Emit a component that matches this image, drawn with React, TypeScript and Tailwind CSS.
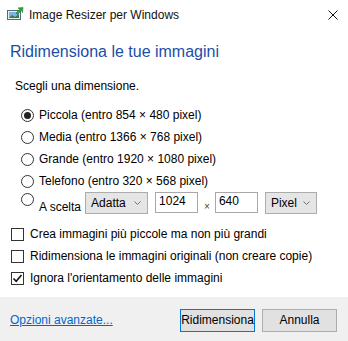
import React from "react";

function AppIcon() {
  return (
    <svg width="17" height="14" viewBox="0 0 17 14" aria-hidden>
      <rect x="0.5" y="3.5" width="13" height="9" fill="#e8eef5" stroke="#4a6a8a" />
      <rect x="2" y="5" width="10" height="6" fill="#7fb2dc" />
      <path d="M2 11 L5 8 L8 10 L12 7 L12 11 Z" fill="#3f7a3a" />
      <path d="M9 6 L13 2 L11 1 L16 0.5 L15.5 5.5 L14.5 3.5 L10.5 7.5 Z" fill="#2fa53a" stroke="#1c7a25" strokeWidth="0.6" />
    </svg>
  );
}

function Radio({ checked, label }: { checked?: boolean; label?: string }) {
  return (
    <div className="flex items-center h-[22px]">
      <span className="ml-[21px] w-[13px] h-[13px] rounded-full border border-[#333] bg-white flex items-center justify-center shrink-0">
        {checked && <span className="w-[7px] h-[7px] rounded-full bg-[#222]" />}
      </span>
      {label && <span className="ml-[5px]">{label}</span>}
    </div>
  );
}

function Check({ checked, label }: { checked?: boolean; label: string }) {
  return (
    <div className="flex items-center h-[22px]">
      <span className="ml-[11px] w-[13px] h-[13px] border border-[#333] bg-white flex items-center justify-center shrink-0">
        {checked && (
          <svg width="11" height="11" viewBox="0 0 11 11" aria-hidden>
            <path d="M1.5 5.5 L4.2 8.3 L9.5 2" fill="none" stroke="#111" strokeWidth="1.6" />
          </svg>
        )}
      </span>
      <span className="ml-[6px]">{label}</span>
    </div>
  );
}

function Select({ value, width }: { value: string; width: string }) {
  return (
    <div className={`${width} h-[22px] bg-[#e5e5e5] border border-[#acacac] flex items-center justify-between pl-[5px] pr-[6px]`}>
      <span>{value}</span>
      <svg width="7" height="5" viewBox="0 0 7 5" aria-hidden>
        <path d="M0.5 0.5 L3.5 3.5 L6.5 0.5" fill="none" stroke="#707070" strokeWidth="1" />
      </svg>
    </div>
  );
}

function Field({ value }: { value: string }) {
  return (
    <div className="w-[43px] h-[21px] bg-white border border-[#a8a8a8] pl-[3px] leading-[17px]">{value}</div>
  );
}

export default function App() {
  return (
    <div className="w-[348px] h-[341px] bg-white flex flex-col text-[12px] text-black font-['Liberation_Sans',Arial,sans-serif] overflow-hidden">
      <div className="h-[30px] flex items-center shrink-0">
        <span className="ml-[7px] mt-[-2px]">
          <AppIcon />
        </span>
        <span className="ml-[5px] text-[#111]">Image Resizer per Windows</span>
        <svg className="ml-auto mr-[10px]" width="10" height="10" viewBox="0 0 10 10" aria-hidden>
          <path d="M0.5 0.5 L9.5 9.5 M9.5 0.5 L0.5 9.5" stroke="#111" strokeWidth="1" />
        </svg>
      </div>

      <div className="flex-1 flex flex-col">
        <div className="ml-[10px] mt-[12px] text-[16px] leading-[20px] text-[#1c4ea6]">Ridimensiona le tue immagini</div>
        <div className="ml-[15px] mt-[16px] leading-[16px]">Scegli una dimensione.</div>

        <div className="mt-[10px] flex flex-col">
          <Radio checked label="Piccola (entro 854 × 480 pixel)" />
          <Radio label="Media (entro 1366 × 768 pixel)" />
          <Radio label="Grande (entro 1920 × 1080 pixel)" />
          <Radio label="Telefono (entro 320 × 568 pixel)" />
          <div className="flex items-start h-[26px]">
            <div className="mt-[-4px]">
              <Radio />
            </div>
            <span className="ml-[5px] mt-[6px]">A scelta</span>
            <div className="ml-[4px] flex items-start">
              <Select value="Adatta" width="w-[63px]" />
              <div className="ml-[7px]">
                <Field value="1024" />
              </div>
              <span className="ml-[6px] mt-[7px] text-[10px] text-[#444]">×</span>
              <div className="ml-[5px]">
                <Field value="640" />
              </div>
              <div className="ml-[7px]">
                <Select value="Pixel" width="w-[52px]" />
              </div>
            </div>
          </div>
        </div>

        <div className="mt-[5px] flex flex-col">
          <Check label="Crea immagini più piccole ma non più grandi" />
          <Check label="Ridimensiona le immagini originali (non creare copie)" />
          <Check checked label="Ignora l'orientamento delle immagini" />
        </div>
      </div>

      <div className="h-[44px] bg-[#f0f0f0] flex items-center shrink-0 pl-[10px] pr-[11px]">
        <a href="#" className="text-[#0066cc] underline mt-[2px]">Opzioni avanzate...</a>
        <button className="ml-auto w-[75px] h-[23px] bg-[#e1e1e1] border border-[#0078d7] mt-[2px]">Ridimensiona</button>
        <button className="ml-[7px] w-[75px] h-[23px] bg-[#e1e1e1] border border-[#adadad] mt-[2px]">Annulla</button>
      </div>
    </div>
  );
}
